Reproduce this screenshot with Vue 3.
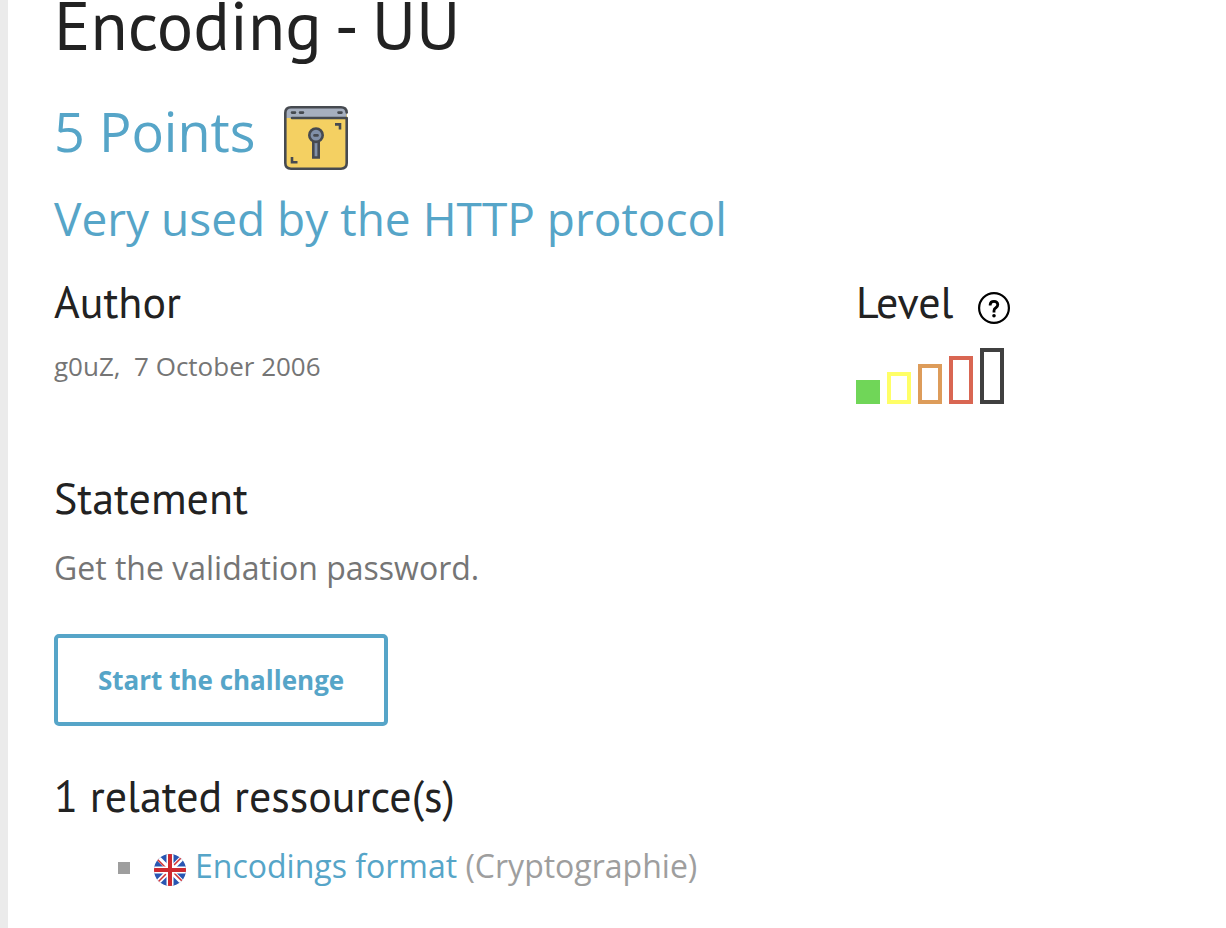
<script setup>
const levels = [
  { name: 'very-easy', filled: true },
  { name: 'easy', filled: false },
  { name: 'medium', filled: false },
  { name: 'hard', filled: false },
  { name: 'very-hard', filled: false },
]
</script>

<template>
  <main class="page">
    <h1>Encoding - UU</h1>

    <div class="points">
      <span class="points-value">5 Points</span>
      <svg class="lock" viewBox="0 0 64 64" aria-hidden="true">
        <rect x="1" y="1" width="62" height="62" rx="5" fill="#f4d062" />
        <path d="M1 12V6q0-5 5-5h52q5 0 5 5l-1 6z" fill="#a6afbf" />
        <g fill="none" stroke="#464a50" stroke-width="2.6" stroke-linecap="round" stroke-linejoin="round">
          <path d="M62.700 6.500C62.500 3 60.500 1.300 57 1.300H7Q1.300 1.300 1.300 7v50q0 5.700 5.700 5.700h50q5.700 0 5.700-5.700V12H8" />
          <path d="M8 6.600h3M16 6.600h3M54.500 6.600h3" />
          <path d="M51 18.400h5V23.500M8 51v5.200h5.500" stroke-linecap="butt" stroke-linejoin="miter" />
          <path d="M29.300 36v15.500h5.400V36" fill="#8190a8" stroke-linejoin="miter" />
          <circle cx="32" cy="29.200" r="6.700" fill="#8190a8" />
          <path d="M30.500 29.400h3" />
        </g>
      </svg>
    </div>

    <p class="subtitle">Very used by the HTTP protocol</p>

    <div class="details">
      <section>
        <h2>Author</h2>
        <p class="author">g0uZ,&nbsp; 7 October 2006</p>
      </section>
      <section>
        <div class="level-head">
          <h2>Level</h2>
          <button class="help" type="button" aria-label="About levels">
            <svg viewBox="0 0 32 32" aria-hidden="true">
              <circle cx="16" cy="16" r="14.900" fill="none" stroke="#000" stroke-width="2.200" />
              <path d="M12.200 13.600V12.500Q12.500 9.300 16 9.300t3.800 3.300q0 2-1.900 3.200t-1.900 3V20.500" fill="none" stroke="#000" stroke-width="2.800" />
              <circle cx="16" cy="23.700" r="1.800" />
            </svg>
          </button>
        </div>
        <div class="bars" role="img" aria-label="Very easy">
          <span v-for="l in levels" :key="l.name" class="bar" :class="[l.name, { filled: l.filled }]"></span>
        </div>
      </section>
    </div>

    <section class="block">
      <h2>Statement</h2>
      <p class="statement">Get the validation password.</p>
      <button class="start" type="button">Start the challenge</button>
    </section>

    <section class="block">
      <h2>1 related ressource(s)</h2>
      <ul class="resources">
        <li>
          <svg class="flag" viewBox="0 0 32 32" aria-hidden="true">
            <defs><clipPath id="disc"><circle cx="16" cy="16" r="16" /></clipPath></defs>
            <g clip-path="url(#disc)">
              <path d="M0 0h32v32H0z" fill="#2956b2" />
              <path d="M2 2l28 28M30 2L2 30" stroke="#fff" stroke-width="5" />
              <path d="M3 5l9 9M20 11l8-8M12 20l-8 8M20 19l9 9" stroke="#d03338" stroke-width="1.600" />
              <path d="M16 0v32M0 16h32" stroke="#fff" stroke-width="7" />
              <path d="M16 0v32M0 16h32" stroke="#ce2a30" stroke-width="4" />
            </g>
          </svg>
          <span><a href="#">Encodings format</a> (Cryptographie)</span>
        </li>
      </ul>
    </section>
  </main>
</template>

<style>
body {
  background: #fff;
}
</style>

<style scoped>
.page {
  box-sizing: border-box;
  min-height: 100vh;
  padding-left: 46px;
  border-left: 8px solid #ebebeb;
  font-family: "Open Sans", "Noto Sans", sans-serif;
  color: #757575;
}
h1, h2, p, ul {
  margin: 0;
  font-weight: 400;
}
h1, h2 {
  font-family: "PT Sans", "Noto Sans", "Open Sans", sans-serif;
  color: #222;
}
h1 {
  font-size: 68px;
  line-height: 50px;
}
h2 {
  font-size: 44px;
  line-height: 56px;
}
.points {
  display: flex;
  gap: 28px;
  margin-top: 49px;
  color: #56a5c8;
}
.points-value {
  font-size: 54px;
  line-height: 64px;
}
.lock {
  width: 64px;
  height: 64px;
  margin-top: 7px;
}
.subtitle {
  margin-top: 16px;
  font-size: 46px;
  line-height: 64px;
  color: #56a5c8;
}
.details {
  display: grid;
  grid-template-columns: 13fr 6fr;
  margin-top: 24px;
}
.author {
  margin-top: 16px;
  font-size: 26px;
  line-height: 40px;
}
.level-head {
  display: flex;
  align-items: flex-end;
  gap: 25px;
}
.help {
  width: 32px;
  height: 32px;
  margin-bottom: 6px;
  padding: 0;
  border: 0;
  background: none;
}
.help svg {
  display: block;
}
.bars {
  display: flex;
  align-items: flex-end;
  gap: 7px;
  height: 56px;
  margin-top: 18px;
}
.bar {
  box-sizing: border-box;
  width: 24px;
  border: 4px solid;
}
.filled {
  background: currentColor;
}
.very-easy {
  height: 24px;
  color: #70d658;
}
.easy {
  height: 32px;
  color: #ffff66;
}
.medium {
  height: 40px;
  color: #dd9c5a;
}
.hard {
  height: 48px;
  color: #d96652;
}
.very-hard {
  height: 56px;
  color: #404040;
}
.details + .block {
  margin-top: 66px;
}
.block {
  margin-top: 42px;
}
.statement {
  margin: 18px 0 42px;
  font-size: 32px;
  line-height: 48px;
}
.start {
  display: block;
  padding: 24px 40px;
  border: 4px solid #56a5c8;
  border-radius: 5px;
  background: #fff;
  color: #56a5c8;
  font: 700 26px/36px "Open Sans", "Noto Sans", sans-serif;
}
.resources {
  margin-top: 18px;
  padding: 0 0 0 64px;
  list-style: none;
  font-size: 32px;
  line-height: 48px;
  color: #9e9e9e;
}
.resources li {
  display: flex;
  align-items: center;
}
.resources li::before {
  content: "";
  width: 12px;
  height: 12px;
  margin: 4px 24px 0 0;
  background: #9e9e9e;
}
.flag {
  width: 32px;
  height: 32px;
  margin: 8px 9px 0 0;
}
.resources a {
  color: #56a5c8;
  text-decoration: none;
}
</style>
